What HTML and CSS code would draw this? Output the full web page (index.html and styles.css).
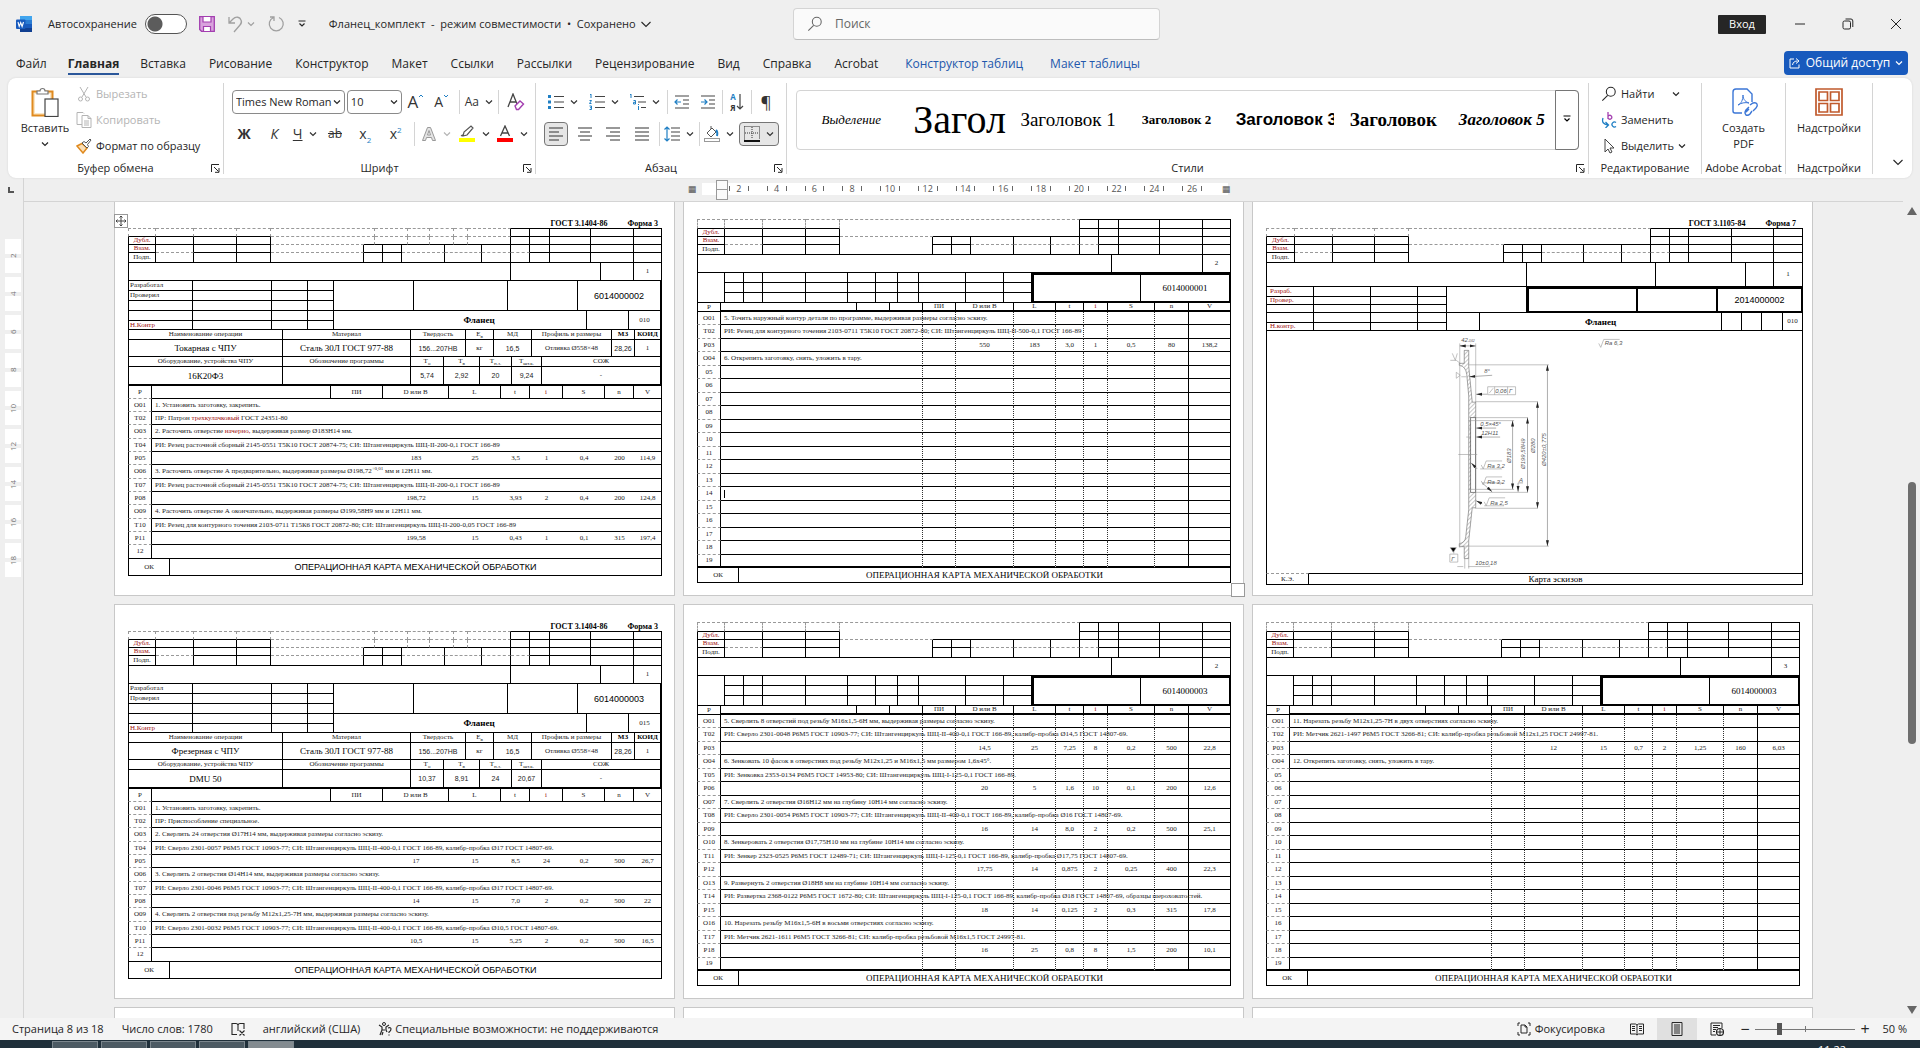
FILE: index.html
```html
<!DOCTYPE html>
<html lang="ru">
<head>
    <meta charset="UTF-8">
    <meta name="viewport" content="width=device-width, initial-scale=1.0">
    <title>Фланец_комплект - Word</title>
    <link rel="stylesheet" href="styles.css">
</head>
<body>

    <!-- shared symbols -->
    <svg class="defs" aria-hidden="true">
        <symbol id="chev" viewBox="0 0 8 8"><path d="M1 2.5l3 3 3-3" fill="none" stroke="currentColor" stroke-width="1.2"/></symbol>
        <symbol id="bigchev" viewBox="0 0 12 12"><path d="M1.500 4L6 8.500 10.500 4" fill="none" stroke="currentColor" stroke-width="1.1"/></symbol>
        <symbol id="launch" viewBox="0 0 9 9"><path d="M.5 8V.5H8M3 3l4.500 4.500M8 4v4.300H4" fill="none" stroke="currentColor"/></symbol>
        <symbol id="glass" viewBox="0 0 18 18"><circle cx="11" cy="6.500" r="5" fill="none" stroke="currentColor" stroke-width="1.200"/><path d="M7.500 10.500L1.500 16.500" stroke="currentColor" stroke-width="1.200"/></symbol>
    </svg>

    <!-- title bar -->
    <header class="titlebar">
        <div class="quick">
            <svg class="ic16" viewBox="0 0 16 16"><rect x="4" y="0" width="12" height="16" rx="1" fill="#2b7cd3"/><rect x="4" y="0" width="12" height="4" fill="#41a5ee"/><rect x="4" y="8" width="12" height="4" fill="#185abd"/><rect x="4" y="12" width="12" height="4" fill="#103f91"/><rect x="0" y="3.500" width="9.500" height="9.500" rx="1" fill="#185abd"/><path d="M2 6l1.200 4.500L4.700 6.500l1.400 4L7.500 6" fill="none" stroke="#fff" stroke-width="1.100"/></svg>
            <label class="autosave">Автосохранение <input type="checkbox" class="switch"></label>
            <button class="plain" aria-label="Сохранить"><svg class="ic16" viewBox="0 0 16 16"><path d="M.7.7h14.600v14.600H2.500L.7 13.500z" fill="#d9a3dd" stroke="#a33eb0" stroke-width="1.300"/><path d="M4 1v5h8V1M4.500 15v-4.500h7V15" fill="#fff" stroke="#a33eb0" stroke-width="1.200"/></svg></button>
            <button class="plain dim" aria-label="Отменить"><svg class="ic18" viewBox="0 0 18 18"><path d="M2 2v6h6M2 8l4-4c3-3 7-2 8 1 1 2 0 4-1 5L7 17" fill="none" stroke="currentColor" stroke-width="1.300"/></svg><svg class="chev"><use href="#chev"/></svg></button>
            <button class="plain dim" aria-label="Повторить"><svg class="ic18" viewBox="0 0 18 18"><path d="M3 2h4v4M6.500 2.500A7 7 0 1 0 12 2.500" fill="none" stroke="currentColor" stroke-width="1.300"/></svg></button>
            <button class="plain" aria-label="Настройка панели"><svg class="ic10" viewBox="0 0 10 10"><path d="M1.500 2h7M2.500 4.500L5 7l2.500-2.500" fill="none" stroke="currentColor" stroke-width="1.200"/></svg></button>
            <button class="plain docname">Фланец_комплект &nbsp;-&nbsp; режим совместимости &nbsp;•&nbsp; Сохранено <svg class="ic12"><use href="#bigchev"/></svg></button>
        </div>
        <label class="search"><svg class="ic16"><use href="#glass"/></svg><input type="search" placeholder="Поиск" aria-label="Поиск"></label>
        <div class="window-buttons">
            <button class="signin">Вход</button>
            <button class="plain" aria-label="Свернуть"><svg class="ic12" viewBox="0 0 12 12"><path d="M1 6h10" stroke="currentColor"/></svg></button>
            <button class="plain" aria-label="Восстановить"><svg class="ic12" viewBox="0 0 12 12"><rect x="1" y="3" width="7.500" height="8" rx="1.500" fill="none" stroke="currentColor"/><path d="M3.500 1h5.500q1.800 0 1.800 2v6" fill="none" stroke="currentColor"/></svg></button>
            <button class="plain" aria-label="Закрыть"><svg class="ic12" viewBox="0 0 12 12"><path d="M1 1l10 10M11 1L1 11" stroke="currentColor"/></svg></button>
        </div>
    </header>

    <nav class="tabs">
        <a href="#file">Файл</a>
        <a href="#home" class="active">Главная</a>
        <a href="#insert">Вставка</a>
        <a href="#draw">Рисование</a>
        <a href="#design">Конструктор</a>
        <a href="#layout">Макет</a>
        <a href="#refs">Ссылки</a>
        <a href="#mail">Рассылки</a>
        <a href="#review">Рецензирование</a>
        <a href="#view">Вид</a>
        <a href="#help">Справка</a>
        <a href="#acrobat">Acrobat</a>
        <a href="#tdesign" class="context">Конструктор таблиц</a>
        <a href="#tlayout" class="context">Макет таблицы</a>
        <button class="share"><svg class="ic12" viewBox="0 0 12 12"><path d="M5 2H1v9h9V7.500M3.500 8c.5-3 2.500-4 5-4M7 1.500L10 4 7 6.500" fill="none" stroke="currentColor"/></svg> Общий доступ <svg class="chev"><use href="#chev"/></svg></button>
    </nav>

    <!-- ribbon -->
    <section class="ribbon">
        <div class="group clipboard">
            <div class="body">
                <button class="large">
                    <svg class="ic30" viewBox="0 0 30 30"><rect x="2.500" y="4.500" width="20" height="24" fill="#fbe6c4" stroke="#e08a1e" stroke-width="2"/><rect x="5" y="7" width="15" height="19" fill="#fff"/><path d="M7 7V4h3a2.500 2.500 0 0 1 5 0h3v3z" fill="#fff" stroke="#777" stroke-width="1.200"/><rect x="15" y="12" width="13" height="17.500" fill="#fff" stroke="#444" stroke-width="1.200"/></svg>
                    Вставить
                    <svg class="chev"><use href="#chev"/></svg>
                </button>
                <div class="stack">
                    <button class="row off"><svg class="ic16" viewBox="0 0 16 16"><path d="M4 1l6 10M12 1L6 11" stroke="currentColor" fill="none"/><circle cx="4.500" cy="13" r="2" fill="none" stroke="currentColor"/><circle cx="11.500" cy="13" r="2" fill="none" stroke="currentColor"/></svg>Вырезать</button>
                    <button class="row off"><svg class="ic16" viewBox="0 0 16 16"><path d="M6 12.500H1v-12h6l1 1M6 3.500h6l3 3v9H6zM12 3.500v3h3M8 9h5M8 11h5M8 13h5" stroke="currentColor" fill="none"/></svg>Копировать</button>
                    <button class="row"><svg class="ic16" viewBox="0 0 16 16"><path d="M1 8l5-2.500 5 4.500-4 5z" fill="#fbe0b8" stroke="#e08a1e" stroke-width="1.500"/><path d="M6 5l2-1.500 2 1.500 4-4 1 1-3.500 4.500 1 2-1.500 1.500z" fill="#fff" stroke="#555"/></svg>Формат по образцу</button>
                </div>
            </div>
            <div class="caption">Буфер обмена <svg class="launch"><use href="#launch"/></svg></div>
        </div>

        <div class="group font">
            <div class="body rows">
                <div class="line">
                    <label class="combo face"><select aria-label="Шрифт"><option>Times New Roman</option></select><svg class="chev"><use href="#chev"/></svg></label>
                    <label class="combo size"><select aria-label="Размер"><option>10</option></select><svg class="chev"><use href="#chev"/></svg></label>
                    <button class="tool glyph-l">A<svg class="mini blue" viewBox="0 0 6 6"><path d="M1 4l2-2 2 2" fill="none" stroke="currentColor"/></svg></button>
                    <button class="tool glyph-m">A<svg class="mini blue" viewBox="0 0 6 6"><path d="M1 2l2 2 2-2" fill="none" stroke="currentColor"/></svg></button>
                    <i class="bar"></i>
                    <button class="tool drop glyph-s">Aa<svg class="chev"><use href="#chev"/></svg></button>
                    <i class="bar"></i>
                    <button class="tool glyph-l" aria-label="Очистить формат"><svg class="ic18" viewBox="0 0 18 18"><path d="M1 14L6 1l4 10M3 9h6" fill="none" stroke="#444" stroke-width="1.300"/><path d="M8 13l5-5 3.500 3-5 5.500h-2z" fill="#fff" stroke="#a33eb0" stroke-width="1.400"/></svg></button>
                </div>
                <div class="line spread">
                    <button class="tool"><b>Ж</b></button>
                    <button class="tool"><em>К</em></button>
                    <button class="tool drop"><u>Ч</u><svg class="chev"><use href="#chev"/></svg></button>
                    <button class="tool glyph-s"><s>ab</s></button>
                    <button class="tool"><span>x<sub>2</sub></span></button>
                    <button class="tool"><span>x<sup>2</sup></span></button>
                    <i class="bar"></i>
                    <button class="tool drop dim" aria-label="Эффекты"><svg class="ic16" viewBox="0 0 16 16"><path d="M1.500 14.500L6.500 1.500h3l5 13h-3l-1-3h-5l-1 3zM6.500 9h3L8 4.500z" fill="#e4e4e4" stroke="#999"/></svg><svg class="chev"><use href="#chev"/></svg></button>
                    <button class="tool drop" aria-label="Цвет выделения"><svg class="ic18" viewBox="0 0 18 18"><path d="M5 11l1-4 7-6 2 2-6 7-4 1zM3 11l3-2" fill="none" stroke="#555" stroke-width="1.200"/><rect x="1" y="13" width="16" height="4" fill="#ff0"/></svg><svg class="chev"><use href="#chev"/></svg></button>
                    <button class="tool drop" aria-label="Цвет текста"><svg class="ic18" viewBox="0 0 18 18"><path d="M4.500 11L9 1l4.500 10M6 8h6" fill="none" stroke="#444" stroke-width="1.300"/><rect x="1" y="13" width="16" height="4" fill="#f00"/></svg><svg class="chev"><use href="#chev"/></svg></button>
                </div>
            </div>
            <div class="caption">Шрифт <svg class="launch"><use href="#launch"/></svg></div>
        </div>

        <div class="group para">
            <div class="body rows">
                <div class="line lists">
                    <button class="tool drop" aria-label="Маркеры"><svg class="ic16" viewBox="0 0 16 16"><path d="M6 2.500h10M6 8h10M6 13.500h10" stroke="#444" stroke-width="1.200"/><path d="M0 2.500h3M0 8h3M0 13.500h3" stroke="#1f7fc4" stroke-width="3"/></svg><svg class="chev"><use href="#chev"/></svg></button>
                    <button class="tool drop" aria-label="Нумерация"><svg class="ic16" viewBox="0 0 16 16"><path d="M6 2.500h10M6 8h10M6 13.500h10" stroke="#444" stroke-width="1.200"/><path d="M1 1l1-1v4M.5 6.500h2L.5 9.500h2M.5 12h2v3.500h-2M1 13.700h1.500" fill="none" stroke="#1f7fc4"/></svg><svg class="chev"><use href="#chev"/></svg></button>
                    <button class="tool drop" aria-label="Многоуровневый список"><svg class="ic16" viewBox="0 0 16 16"><path d="M4 2.500h10M8 8h8M11 13.500h5" stroke="#444" stroke-width="1.200"/><path d="M0 1l1-1v4M3.500 6.500h2V10h-2V8.300h2M8.500 12v4M8.500 10v1" fill="none" stroke="#1f7fc4"/></svg><svg class="chev"><use href="#chev"/></svg></button>
                    <i class="bar"></i>
                    <button class="tool" aria-label="Уменьшить отступ"><svg class="ic16" viewBox="0 0 16 16"><path d="M1 2h14M9 6h6M9 10h6M1 14h14" stroke="#444" stroke-width="1.200"/><path d="M7 8H1M3.500 5.500L1 8l2.500 2.500" fill="none" stroke="#1f7fc4" stroke-width="1.200"/></svg></button>
                    <button class="tool" aria-label="Увеличить отступ"><svg class="ic16" viewBox="0 0 16 16"><path d="M1 2h14M9 6h6M9 10h6M1 14h14" stroke="#444" stroke-width="1.200"/><path d="M1 8h6M4.500 5.500L7 8l-2.500 2.500" fill="none" stroke="#1f7fc4" stroke-width="1.200"/></svg></button>
                    <i class="bar"></i>
                    <button class="tool sort" aria-label="Сортировка"><span><b class="blue">А</b><b>Я</b></span><svg class="arrow" viewBox="0 0 8 18"><path d="M4 1v15M1 13l3 3 3-3" fill="none" stroke="#444" stroke-width="1.200"/></svg></button>
                    <i class="bar"></i>
                    <button class="tool glyph-l">¶</button>
                </div>
                <div class="line spread">
                    <button class="tool on" aria-label="По левому краю"><svg class="ic16" viewBox="0 0 16 16"><path d="M1 2h14M1 6h10M1 10h14M1 14h10" stroke="#333" stroke-width="1.200"/></svg></button>
                    <button class="tool" aria-label="По центру"><svg class="ic16" viewBox="0 0 16 16"><path d="M1 2h14M3 6h10M1 10h14M3 14h10" stroke="#333" stroke-width="1.200"/></svg></button>
                    <button class="tool" aria-label="По правому краю"><svg class="ic16" viewBox="0 0 16 16"><path d="M1 2h14M5 6h10M1 10h14M5 14h10" stroke="#333" stroke-width="1.200"/></svg></button>
                    <button class="tool" aria-label="По ширине"><svg class="ic16" viewBox="0 0 16 16"><path d="M1 2h14M1 6h14M1 10h14M1 14h14" stroke="#333" stroke-width="1.200"/></svg></button>
                    <i class="bar"></i>
                    <button class="tool drop" aria-label="Интервал"><svg class="ic16" viewBox="0 0 16 16"><path d="M7 2h9M7 6h9M7 10h9M7 14h9" stroke="#444" stroke-width="1.200"/><path d="M3 1v14M.5 3.500L3 1l2.500 2.500M.5 12.500L3 15l2.500-2.500" fill="none" stroke="#1f7fc4" stroke-width="1.200"/></svg><svg class="chev"><use href="#chev"/></svg></button>
                    <i class="bar"></i>
                    <button class="tool drop" aria-label="Заливка"><svg class="ic16" viewBox="0 0 16 16"><path d="M3 7l5-5 4 4-5 5zM7 3V0" fill="#fff" stroke="#555"/><path d="M12 4q2 2 1 6" fill="none" stroke="#1f7fc4" stroke-width="2"/><rect x=".5" y="12.500" width="15" height="3" fill="#fff" stroke="#999"/></svg><svg class="chev"><use href="#chev"/></svg></button>
                    <button class="tool drop on" aria-label="Границы"><svg class="ic16" viewBox="0 0 16 16"><path d="M.5.5h15v13M.5.500v13M8 1v12M1 7h14" fill="none" stroke="#333" stroke-dasharray="1 1"/><path d="M0 15h16" stroke="#111" stroke-width="2"/></svg><svg class="chev"><use href="#chev"/></svg></button>
                </div>
            </div>
            <div class="caption">Абзац <svg class="launch"><use href="#launch"/></svg></div>
        </div>

        <div class="group styles">
            <div class="body">
                <div class="gallery">
                    <button class="st emph">Выделение</button>
                    <button class="st title">Загол</button>
                    <button class="st h1">Заголовок 1</button>
                    <button class="st h2">Заголовок 2</button>
                    <button class="st h3">Заголовок 3</button>
                    <button class="st h4">Заголовок</button>
                    <button class="st h5">Заголовок 5</button>
                    <button class="more" aria-label="Ещё"><svg class="ic10" viewBox="0 0 10 10"><path d="M1.500 2h7M2.500 4.500L5 7l2.500-2.500" fill="none" stroke="currentColor" stroke-width="1.200"/></svg></button>
                </div>
            </div>
            <div class="caption">Стили <svg class="launch"><use href="#launch"/></svg></div>
        </div>

        <div class="group edit">
            <div class="body">
                <div class="stack">
                    <button class="row"><svg class="ic16"><use href="#glass"/></svg>Найти <svg class="chev far"><use href="#chev"/></svg></button>
                    <button class="row"><svg class="ic16" viewBox="0 0 16 16"><path d="M7 0v7M7 4.500a2 2 0 1 1 0 1.500" fill="none" stroke="#a33eb0" stroke-width="1.300"/><path d="M15 10.500a2.500 2.500 0 1 0 0 4M2 6q-2 6 5 7M4.500 10L7.500 13l-3 3" fill="none" stroke="#1f7fc4" stroke-width="1.300"/></svg>Заменить</button>
                    <button class="row"><svg class="ic16" viewBox="0 0 16 16"><path d="M4 1v13l3-3 2 4 2-1-2-4h4z" fill="#fff" stroke="#444"/></svg>Выделить <svg class="chev"><use href="#chev"/></svg></button>
                </div>
            </div>
            <div class="caption">Редактирование</div>
        </div>

        <div class="group acrobat">
            <div class="body">
                <button class="large">
                    <svg class="ic30" viewBox="0 0 30 30"><path d="M13 26H6q-2 0-2-2V5q0-3 3-3h11l5 5v8" fill="none" stroke="#3b76d6" stroke-width="1.400"/><path d="M9 18c3-1 5-5 5-10 0 5 3 7 6 8-4-1-8 0-11 2z" fill="none" stroke="#3b76d6"/><path d="M17 25l3-3M21 18l3-2q3-1 4 1 1 2-1 4l-3 3M20 20l-3 3q-2 3 0 5 2 1 4-1l2-3" fill="none" stroke="#3b76d6" stroke-width="1.400"/></svg>
                    <span>Создать<br>PDF</span>
                </button>
            </div>
            <div class="caption">Adobe Acrobat</div>
        </div>

        <div class="group addins">
            <div class="body">
                <button class="large">
                    <svg class="ic30" viewBox="0 0 30 30"><path d="M2 2h26v26H2zM5 5h8.500v8.500H5zM16.500 5H25v8.500h-8.500zM5 16.500h8.500V25H5zM16.500 16.500H25V25h-8.500z" fill="none" stroke="#c05a2c" stroke-width="1.700"/></svg>
                    Надстройки
                </button>
            </div>
            <div class="caption">Надстройки</div>
        </div>
        <button class="collapse" aria-label="Свернуть ленту"><svg class="ic12"><use href="#bigchev"/></svg></button>
    </section>

    <!-- rulers and pages -->
    <div class="ruler-row">
        <div class="corner"><i></i></div>
        <div class="hruler">
            <span class="edge">▦</span>
            <div class="scale">
                <i class="indent"></i>
                <span>2</span><span>4</span><span>6</span><span>8</span><span>10</span><span>12</span><span>14</span><span>16</span><span>18</span><span>20</span><span>22</span><span>24</span><span>26</span>
            </div>
            <span class="edge right">▦</span>
        </div>
    </div>

    <main class="workspace">
        <div class="vruler">
            <span>2</span><span>4</span><span>6</span><span>8</span><span>10</span><span>12</span><span>14</span><span>16</span><span>18</span>
        </div>
        <div class="desk" id="desk"></div>
        <div class="scrollbar"><i class="up"></i><i class="thumb"></i><i class="down"></i></div>
    </main>

    <footer class="status">
        <span>Страница 8 из 18</span>
        <span>Число слов: 1780</span>
        <svg class="ic14" viewBox="0 0 14 14"><path d="M6 12.500H1v-11h4q1.500 0 2 1.500.5-1.500 2-1.500h4V7M7 3v6M8.500 8.500l5 5M13.500 8.500l-5 5" fill="none" stroke="currentColor" stroke-width="1.100"/></svg>
        <span>английский (США)</span>
        <span class="access"><svg class="ic14" viewBox="0 0 14 14"><circle cx="6" cy="2" r="1.500" fill="none" stroke="currentColor"/><path d="M1 3l3 2v3l-2 5M11 3L8 5v3l1 2M4 8h3M5 10l-1 3M10 6q3-1 3 1t-2 3v1M11 12.500v1" fill="none" stroke="currentColor" stroke-width="1.200"/></svg>Специальные возможности: не поддерживаются</span>
        <div class="views">
            <button class="plain focus"><svg class="ic14" viewBox="0 0 14 14"><path d="M3 1H1v3M11 1h2v3M3 13H1v-3M11 13h2v-3M4 3h4l2 2v6H4zM8 3v2h2" fill="none" stroke="currentColor"/></svg>Фокусировка</button>
            <button class="view" aria-label="Чтение"><svg class="ic14" viewBox="0 0 14 14"><path d="M7 3v10M.5 2h5L7 3l1.500-1h5v10h-5L7 13l-1.500-1h-5zM2 4.500h3M2 6.500h3M2 8.500h3M9 4.500h3M9 6.500h3M9 8.500h3" fill="none" stroke="currentColor"/></svg></button>
            <button class="view on" aria-label="Разметка"><svg class="ic14" viewBox="0 0 14 14"><path d="M2 .5h10v13H2zM4 3h6M4 5h6M4 7h6M4 9h6M4 11h6" fill="none" stroke="currentColor"/></svg></button>
            <button class="view" aria-label="Веб-документ"><svg class="ic14" viewBox="0 0 14 14"><path d="M6 13H1V1h11v5M3 3.500h7M3 5.500h5M3 7.500h3M3 9.500h2" fill="none" stroke="currentColor"/><circle cx="10" cy="10" r="3.500" fill="#f4f4f4" stroke="currentColor" stroke-width="1.200"/><path d="M6.500 10h7M10 6.500v7" stroke="currentColor"/></svg></button>
            <button class="plain step" aria-label="Уменьшить">−</button>
            <input type="range" class="zoom" min="10" max="190" value="52" aria-label="Масштаб">
            <button class="plain step" aria-label="Увеличить">+</button>
            <span class="pct">50 %</span>
        </div>
    </footer>
    <div class="taskbar"><i></i><i></i><i></i><i></i><i class="current"></i><span>11:22</span></div>

    <script src="sheets.js"></script>
</body>
</html>
```
FILE: styles.css
```css
* {
    box-sizing: border-box;
}

body {
    margin: 0;
    height: 100vh;
    display: flex;
    flex-direction: column;
    overflow: hidden;
    background: #efefef;
    color: #262626;
    font: 11px/16px "Open Sans", "Noto Sans", sans-serif;
}

button, input, select {
    font: inherit;
    color: inherit;
}

button {
    padding: 0;
    border: 0;
    background: none;
    white-space: nowrap;
}

svg {
    flex: none;
}

.defs { position: absolute; width: 0; height: 0; }
.ic10 { width: 10px; height: 10px; }
.ic12 { width: 12px; height: 12px; }
.ic14 { width: 14px; height: 14px; }
.ic16 { width: 16px; height: 16px; }
.ic18 { width: 18px; height: 18px; }
.ic30 { width: 30px; height: 30px; }
.chev { width: 8px; height: 8px; }
.launch { width: 9px; height: 9px; }
.blue { color: #1f7fc4; }
.dim { color: #a0a0a0; }

/* title bar */
.titlebar {
    flex: none;
    height: 48px;
    display: grid;
    grid-template-columns: 1fr 384px 1fr;
    align-items: center;
    padding-left: 16px;
}

.quick {
    display: flex;
    align-items: center;
    gap: 12px;
}

.autosave {
    display: flex;
    align-items: center;
    gap: 8px;
    margin-left: 4px;
}

.switch {
    appearance: none;
    width: 42px;
    height: 20px;
    margin: 0;
    border: 1px solid #555;
    border-radius: 10px;
    background: radial-gradient(circle at 9px 9px, #5c5c5c 7px, #fff 8px);
}

.plain {
    display: flex;
    align-items: center;
    gap: 4px;
}

.quick .dim { gap: 2px; }
.docname { margin-left: 10px; }

.search {
    height: 32px;
    display: flex;
    align-items: center;
    gap: 12px;
    margin-left: 17px;
    padding: 0 13px;
    background: #fafafa;
    border: 1px solid #d4d4d4;
    border-bottom-color: #bdbdbd;
    border-radius: 4px;
    color: #666;
}

.search input {
    flex: 1;
    min-width: 0;
    padding: 0;
    border: 0;
    background: none;
    font-size: 12px;
    outline: none;
}

.search input::placeholder { color: #666; }

.window-buttons {
    display: flex;
    justify-content: flex-end;
    align-items: center;
    gap: 36px;
    padding-right: 18px;
}

.signin {
    width: 48px;
    height: 19px;
    margin-right: -8px;
    background: #262626;
    color: #fff;
    border-radius: 1px;
}

/* tabs */
.tabs {
    flex: none;
    height: 30px;
    display: flex;
    align-items: flex-start;
    gap: 23px;
    padding: 3px 12px 0 16px;
    font-size: 12px;
}

.tabs a {
    height: 24px;
    line-height: 25px;
    color: inherit;
    text-decoration: none;
    white-space: nowrap;
}

.tabs a.active {
    margin: 0 -2px;
    font-weight: bold;
    border-bottom: 2px solid #2b579a;
}

.tabs a.context {
    margin-left: 4px;
    color: #2257ac;
}

.share {
    display: flex;
    align-items: center;
    justify-content: center;
    gap: 5px;
    width: 124px;
    height: 24px;
    margin-left: auto;
    background: #185abd;
    color: #fff;
    border-radius: 4px;
}

/* ribbon */
.ribbon {
    flex: none;
    height: 100px;
    display: flex;
    margin: 0 8px;
    padding: 5px 0 4px;
    background: #fff;
    border-radius: 8px;
    box-shadow: 0 0 2px #d0d0d0;
}

.group {
    flex: none;
    display: flex;
    flex-direction: column;
    border-right: 1px solid #d4d4d4;
}

.clipboard { width: 216px; }
.font { width: 312px; }
.para { width: 251px; }
.styles { flex: 1; min-width: 0; }
.edit { width: 113px; }
.acrobat { width: 84px; }
.addins { width: 87px; }

.body {
    flex: 1;
    display: flex;
    min-height: 0;
}

.caption {
    display: flex;
    justify-content: center;
    align-items: center;
    height: 12px;
    padding: 0 3px;
    white-space: nowrap;
}

.caption .launch {
    order: 2;
    margin-left: auto;
}

.caption:has(.launch)::before {
    content: "";
    width: 9px;
    margin-right: auto;
}

.large {
    display: flex;
    flex-direction: column;
    align-items: center;
    gap: 3px;
    width: 100%;
    padding-top: 4px;
}

.clipboard .large { width: 62px; margin-left: 6px; }
.clipboard .large .chev { margin-top: 1px; }

.stack {
    display: flex;
    flex-direction: column;
    margin-top: -2px;
}

.row {
    height: 26px;
    display: flex;
    align-items: center;
    gap: 4px;
}

.row.off { color: #b4b4b4; }
.edit .stack { padding-left: 12px; }
.edit .far { margin-left: 14px; }

.rows {
    flex-direction: column;
    gap: 8px;
    padding: 7px 7px 0 8px;
}

.line {
    display: flex;
    flex: none;
    align-items: center;
    height: 24px;
    gap: 2px;
}

.spread { justify-content: space-between; }

.combo {
    display: flex;
    align-items: center;
    height: 24px;
    padding: 0 3px;
    border: 1px solid #8a8a8a;
    border-radius: 4px;
}

.combo select {
    flex: 1;
    min-width: 0;
    appearance: none;
    padding: 0;
    border: 0;
    background: none;
}

.face { width: 113px; }
.size { width: 55px; }

.tool {
    display: flex;
    align-items: center;
    justify-content: center;
    min-width: 24px;
    height: 24px;
    font-size: 14px;
    color: #333;
}

.drop { gap: 6px; }
.tool.dim { color: #b4b4b4; }
.glyph-l { font-size: 17px; }
.glyph-m { font-size: 14px; }
.glyph-s { font-size: 12px; }

.mini {
    width: 6px;
    height: 6px;
    align-self: flex-start;
    margin-top: 3px;
}

.tool.on {
    background: #e6e6e6;
    border: 1px solid #767676;
    border-radius: 4px;
}

.tool.drop.on { padding: 0 4px; }

.tool sub, .tool sup {
    color: #1f7fc4;
    font-size: 8px;
    line-height: 0;
}

.bar {
    width: 1px;
    height: 24px;
    background: #d4d4d4;
}

.font .line:not(.spread) .bar { margin: 0 3px; }
.lists .drop { margin: 0 5px 0 4px; }

.sort span {
    display: flex;
    flex-direction: column;
    font-size: 8px;
    line-height: 11px;
}

.arrow { width: 8px; height: 18px; }

.gallery {
    flex: 1;
    display: flex;
    min-width: 0;
    height: 60px;
    margin: 7px 9px 0;
    border: 1px solid #d4d4d4;
    border-radius: 4px;
    color: #000;
    font-family: "Liberation Serif", serif;
}

.st {
    flex: 1;
    min-width: 0;
    margin: 0 5px;
    overflow: hidden;
    text-align: center;
}

.emph { font-size: 13px; font-style: italic; }
.title { font-size: 40px; line-height: 58px; }
.h1 { font-size: 19px; }
.h2 { font-size: 13px; font-weight: bold; }
.h3 { font: bold 17px "Liberation Sans", sans-serif; text-align: left; }
.h4 { font-size: 19px; font-weight: bold; }
.h5 { font-size: 17px; font-weight: bold; font-style: italic; }

.more {
    width: 24px;
    border: 1px solid #767676;
    border-radius: 0 4px 4px 0;
    margin: -1px;
}

.collapse {
    width: 39px;
    height: 20px;
    margin-top: auto;
    padding-left: 10px;
}

/* rulers */
.ruler-row {
    flex: none;
    height: 23px;
    display: flex;
}

.corner {
    width: 24px;
    border-right: 1px solid #d4d4d4;
    padding: 9px 8px;
}

.corner i {
    display: block;
    width: 6px;
    height: 6px;
    border: solid #555;
    border-width: 0 0 2px 2px;
}

.hruler {
    flex: 1;
    display: flex;
    justify-content: center;
    align-items: center;
    padding: 0 26px 2px 0;
    color: #555;
    font-size: 9px;
    line-height: 12px;
}

.scale {
    position: relative;
    display: flex;
    width: 526px;
    padding: 0 17px 0 18px;
    background: #fff;
}

.scale span {
    flex: 1;
    display: flex;
    justify-content: space-between;
    align-items: center;
    padding: 0 9px;
}

.scale span::before, .scale span::after {
    content: "";
    width: 1px;
    height: 5px;
    background: #666;
}

.indent {
    position: absolute;
    left: 14px;
    top: -3px;
    width: 12px;
    height: 20px;
    border: 1px solid #999;
    background: linear-gradient(#fafafa 8px, #999 8px 9px, #fafafa 9px);
}

.edge {
    width: 20px;
    text-align: center;
}

.edge.right {
    position: relative;
    margin-left: -12px;
}

.workspace {
    flex: 1;
    min-height: 0;
    display: flex;
    overflow: hidden;
}

.vruler {
    width: 24px;
    border-right: 1px solid #d4d4d4;
    padding: 36px 6px 0 5px;
    color: #777;
    font-size: 8px;
}

.vruler span {
    display: flex;
    align-items: center;
    justify-content: center;
    height: 38px;
    writing-mode: vertical-rl;
    transform: rotate(180deg);
    background: linear-gradient(#efefef 2px, #fff 2px 17px, #efefef 17px 21px, #fff 21px 36px, #efefef 36px);
}

.desk {
    flex: 1;
    display: grid;
    grid-template-columns: repeat(auto-fit, 561px);
    grid-auto-rows: 394px;
    justify-content: center;
    align-content: start;
    gap: 9px 8px;
    border-top: 1px solid #d4d4d4;
    margin-right: 1px;
    overflow: hidden;
}

.scrollbar {
    width: 16px;
    display: flex;
    flex-direction: column;
    align-items: center;
    padding: 6px 0 4px;
}

.up, .down {
    border: 5px solid transparent;
}

.up { border-top: 0; border-bottom: 8px solid #666; }
.down { border-bottom: 0; border-top: 8px solid #666; margin-top: auto; }

.thumb {
    width: 8px;
    height: 262px;
    margin-top: 267px;
    border-radius: 4px;
    background: #6e6e6e;
}

/* sheets of paper */
.sheet {
    position: relative;
    margin-top: -1px;
    padding: 17px 12px 0 13px;
    background: #fff;
    border: 1px solid #c8c8c8;
    color: #222;
    font: 7px/7px "Liberation Serif", serif;
}

.sheet.first-form { padding-top: 16px; }

.gost {
    height: 10px;
    margin: 0;
    padding-right: 4px;
    display: flex;
    justify-content: flex-end;
    gap: 20px;
    font-size: 8px;
    line-height: 11px;
    font-weight: bold;
    color: #000;
}

.form {
    table-layout: fixed;
    border-collapse: separate;
    border-spacing: 0;
}

.form td {
    padding: 0;
    border: 0 solid #000;
    border-width: 0 1px 1px 0;
    text-align: center;
    vertical-align: middle;
    white-space: nowrap;
}

.form td.edge-l { border-left-width: 1px; }
.form td.ts { border-top-width: 1px; }
.form td.td { border-top: 1px dashed #999; }
.form td.ld { border-left: 1px dashed #999; }
.form td.bd { border-bottom: 1px dashed #999; }
.form td.rd { border-right: 1px dashed #999; }
.form td.rh { border-right: 1px dotted #333; }
.form td.rn { border-right-width: 0; }
.form td.bn { border-bottom-width: 0; }
.form td.tt { border-top-width: 2px; }
.form td.bt { border-bottom-width: 2px; }
.form td.lt { border-left-width: 2px; }
.form td.rt { border-right-width: 2px; }
.form td.l { text-align: left; padding-left: 3px; }
.form td.nm { text-align: left; padding-left: 1px; }
.form td.tab { padding-left: 38px; }
.form td.b { font-weight: bold; color: #000; }
.form td.m { font-size: 9px; line-height: 10px; color: #000; }
.form td.s { font-family: "Liberation Sans", sans-serif; }
.form td.cursor::before { content: ""; float: left; width: 1px; height: 8px; background: #000; }

.form sub, .form sup {
    font-size: 5px;
    line-height: 0;
}

/* spelling marks */
.err {
    text-decoration: underline wavy #d00000 1px;
    text-underline-offset: -1px;
    color: #a01010;
}

.sketch {
    display: block;
    width: 537px;
    height: 242px;
    border: solid #000;
    border-width: 0 1px 0 1px;
}

.move, .grip {
    position: absolute;
    width: 14px;
    height: 14px;
    background: #fff;
    border: 1px solid #999;
}

.move { left: -1px; top: 12px; }
.grip { right: -2px; bottom: -2px; }
.move svg { display: block; width: 12px; height: 12px; }

/* status bar */
.status {
    flex: none;
    height: 22px;
    display: flex;
    align-items: center;
    gap: 18px;
    padding: 0 13px 0 12px;
    background: #f4f4f4;
    white-space: nowrap;
}

.access {
    display: flex;
    align-items: center;
    gap: 3px;
}

.views {
    display: flex;
    align-items: center;
    margin-left: auto;
}

.focus { margin-right: 12px; }

.view {
    width: 40px;
    height: 22px;
    display: flex;
    align-items: center;
    justify-content: center;
}

.view.on { background: #e0e0e0; }
.step { width: 16px; justify-content: center; font-size: 16px; }

.zoom {
    appearance: none;
    width: 100px;
    height: 16px;
    margin: 0 2px;
    background: linear-gradient(#777, #777) center/100% 1px no-repeat, linear-gradient(#777, #777) center/1px 6px no-repeat;
}

.zoom::-webkit-slider-thumb {
    appearance: none;
    width: 5px;
    height: 12px;
    background: #555;
}

.pct { width: 34px; text-align: right; }

.taskbar {
    flex: none;
    height: 8px;
    display: flex;
    gap: 3px;
    padding-left: 52px;
    overflow: hidden;
    background: #1f2f3a;
    color: #fff;
}

.taskbar i {
    width: 46px;
    height: 8px;
    margin-top: 1px;
    background: #4c5a63;
    border: 1px solid #7b868d;
}

.taskbar i.current { background: #838b90; }
.taskbar span { margin: 2px 74px 0 auto; }
```
FILE: sheets.js
```js
// Builds the forms on the sheets.
// A cell is "right-edge classes|text"; the right edge is one of the table's column edges.
// Class r2/r3 is a row span, "^" skips a column held by a cell of the row above.
function form(edges, rows) {
    const stops = edges.split(' ').map(Number);
    const cols = stops.map((x, i) => i ? x - stops[i - 1] : x + 1);
    let html = '<table class="form" style="width:' + (stops[stops.length - 1] + 1) + 'px"><colgroup>';
    cols.forEach(w => html += '<col style="width:' + w + 'px">');
    html += '</colgroup>';
    rows.forEach(([height, ...cells]) => {
        let start = -1;
        html += '<tr style="height:' + height + 'px">';
        cells.forEach(cell => {
            const [spec, text = ''] = cell.split('|');
            const [edge, ...cls] = spec.trim().split(' ');
            const end = stops.indexOf(Number(edge));
            const span = end - start;
            const tall = cls.find(c => /^r\d$/.test(c));
            if (start < 0) cls.push('edge-l');
            start = end;
            if (cls.includes('^')) return;
            html += '<td class="' + cls.join(' ') + '" colspan="' + span + '"' +
                (tall ? ' rowspan="' + tall[1] + '"' : '') + '>' + text + '</td>';
        });
        html += '</tr>';
    });
    return html + '</table>';
}

const err = s => '<span class="err">' + s + '</span>';

// title block shared by every form, e holds the column edges
function head(e, firstHeight, dots = []) {
    const [a, b, c, d, f, g, h, i, j, k, l, m, n, o, p] = e;
    const all = [...e, ...dots].sort((x, y) => x - y);
    return form(all.join(' '), [
        [firstHeight, a + ' td rd ld', b + ' td rd', c + ' td rd', d + ' td rd',
            ...dots.map(x => x + ' td bd rd'), k + ' td' + (dots.length ? ' bd' : ' bn'),
            l + ' ts', m + ' ts', n + ' ts', o + ' ts', p + ' ts'],
        [8, a + '|' + err('Дубл.'), b, c, d, f + ' bd rn',
            ...dots.map(x => x + ' rd'), k, l, m, n, o, p],
        [8, a + '|' + err('Взам.'), b + ' bd', c, d, f + (dots.length ? ' bd' : ' bn'), g, h, i + ' bd', j + ' bd', k + ' bd', l + ' bd', m, n, o, p],
        [10, a + '|Подп.', b, c, d, f, g, h, i, j, k, l, m, n, o, p]
    ].map(r => r.map(String)));
}

const EDGES = [27, 65, 108, 142, 235, 254, 273, 316, 353, 382, 401, 421, 462, 505, 533];
const EDGES_K = [28, 66, 108, 142, 237, 256, 275, 317, 355, 384, 403, 422, 465, 507, 536];

// first sheet of an operation card
function cardFirst(d) {
    let html = '<p class="gost"><span>ГОСТ 3.1404-86</span><span>Форма 3</span></p>';
    html += head(EDGES, 9, [246, 279, 301, 325, 339]);
    html += form('382 472 505 533', [[18, '382', '472', '505', '533|1']]);
    html += form('64 143 179 205 285 379 449 458 500 533', [
        [10, '64 nm|Разработал', '143', '179', '205', '285 r3', '379 r3', '449 r3', '533 r3 m s rt|' + d.code],
        [10, '64 nm|Проверил', '143', '179', '205'],
        [10, '64', '143', '179', '205'],
        [10, '64', '143', '179', '205', '458 r2 m b tab|Фланец', '500 r2', '533 r2 rt|' + d.num],
        [9, '64 nm|' + err('Н.Контр'), '143', '179', '205']
    ]);
    html += form('154 282 315 337 351 365 383 403 413 483 506 533', [
        [10, '154|Наименование операции', '282|Материал', '337|Твердость', '365|Е<sub>в</sub>', '403|МД', '483|Профиль и размеры', '506 b|МЗ', '533 b rt|КОИД'],
        [17, '154 m|' + d.op, '282 m|Сталь 30Л ГОСТ 977-88', '337 s|156...207НВ', '365|кг', '403 s|16,5', '483|Отливка Ø558×48', '506 s|28,26', '533 rt|1'],
        [10, '154|Оборудование, устройства ЧПУ', '282|Обозначение программы', '315|Т<sub>о</sub>', '351|Т<sub>в</sub>', '383|Т<sub>п.з.</sub>', '413|Т<sub>шт.к.</sub>', '533 rt|СОЖ'],
        [19, '154 bt m|' + d.machine, '282 bt', '315 s bt|' + d.t[0], '351 s bt|' + d.t[1], '383 s bt|' + d.t[2], '413 s bt|' + d.t[3], '533 bt rt|-']
    ]);
    const rows = [[13, '23 bd|Р', '202', '254|ПИ', '320|D или В', '372|L', '401|t', '434|' + err('i'), '476|S', '505|n', '533|V']];
    d.rows.forEach(([name, text], i) => {
        const h = i % 3 === 2 ? 14 : 13;
        const left = '23 ' + (i < 11 ? 'bd' : '') + '|' + name;
        if (Array.isArray(text)) {
            rows.push([h, left, '254 rn', '320 rn|' + text[0], '372 rn|' + text[1], '401 rn|' + text[2], '434 rn|' + text[3], '476 rn|' + text[4], '505 rn|' + text[5], '533|' + text[6]]);
        } else {
            rows.push([h, left, '533 l|' + text]);
        }
    });
    html += form('23 202 254 320 372 401 434 476 505 533', rows);
    html += form('41 533', [[17, '41|ОК', '533 m s|ОПЕРАЦИОННАЯ КАРТА МЕХАНИЧЕСКОЙ ОБРАБОТКИ']]);
    return html;
}

// following sheets of an operation card
function cardNext(d) {
    let html = head(EDGES, 10);
    html += form('414 505 533', [[18, '414', '505', '533|' + d.page]]);
    const cells = ['46', '65', '108', '150', '178', '200', '221', '268', '306', '334'];
    html += form('27 46 65 108 150 178 200 221 268 306 334 443 533', [
        [10, '27 r3', ...cells, '443 r3 tt lt bt', '533 r3 tt bt rt m|' + d.code],
        [10, '27 ^', ...cells],
        [10, '27 ^', ...cells]
    ]);
    const rows = [[9, '23|Р', '159 bt', '192 bt', '225 bt', '258 bt|ПИ', '316 bt|D или В', '358 bt|L', '386 bt|t', '410 bt|' + err('i'), '457 bt|S', '491 bt|n', '533 bt|V']];
    for (let i = 0; i < 19; i++) {
        const n = String(i + 1).padStart(2, '0');
        const [letter = '', text = ''] = d.rows[i] || [];
        const v = Array.isArray(text) ? text : ['', '', '', '', '', '', ''];
        const h = i && i % 2 ? 14 : 13;
        const last = i === 18 ? ' bt' : '';
        rows.push([h, '23' + (last || ' bd') + '|' + letter + n,
            '225 rh l' + last + (i === 13 && d.cursor ? ' cursor' : '') + '|' + (Array.isArray(text) ? '' : text),
            '258 rh' + last, '316 rh' + last + '|' + v[0], '358 rh' + last + '|' + v[1], '386 rh' + last + '|' + v[2],
            '410 rh' + last + '|' + v[3], '457 rh' + last + '|' + v[4], '491' + last + '|' + v[5], '533' + last + '|' + v[6]]);
    }
    html += form('23 159 192 225 258 316 358 386 410 457 491 533', rows);
    html += form('41 533', [[15, '41|ОК', '533 m|ОПЕРАЦИОННАЯ КАРТА МЕХАНИЧЕСКОЙ ОБРАБОТКИ']]);
    return html;
}

const SKETCH = `<svg class="sketch" viewBox="0 0 537 242" fill="none" stroke="#999" stroke-width=".6" font-family="Liberation Sans" font-style="italic" font-size="6">
    <defs><pattern id="hatch" width="3" height="3" patternUnits="userSpaceOnUse" patternTransform="rotate(45)"><path d="M0 0v3" stroke="#777" stroke-width=".8"/></pattern>
    <marker id="arr" viewBox="0 0 6 4" refX="6" refY="2" markerWidth="6" markerHeight="4" markerUnits="userSpaceOnUse" orient="auto-start-reverse"><path d="M0 .5L6 2 0 3.500z" fill="#222" stroke="none"/></marker></defs>
    <path d="M198 19h4.500v16L206 71h3.500v106H206l-3.500 33v18H198v-12h-5v-3q6-1 6.500-7l3-27V65l-2-22q-1-8-7.500-9v-2h5z" fill="url(#hatch)" stroke="#666"/>
    <rect x="204.500" y="86.500" width="5" height="75" fill="#fff" stroke="#333"/>
    <path d="M193.500 12v205M209.500 12v59M202 33.500h81M195 215.500h88M209 70.500h63M209 177.500h63M205 86.500h57M205 161.500h57M202 89.500h46M202 158.500h46M192 123.500h19M198.500 228v10M202.500 228v10M202 236h22"/>
    <g stroke="#777" marker-start="url(#arr)" marker-end="url(#arr)"><path d="M193.500 14.500h16"/><path d="M281.500 33.500v182"/><path d="M271.500 70.500v107"/><path d="M261.500 86.500v75"/><path d="M246.500 89.500v69"/></g>
    <g stroke="#777"><path marker-start="url(#arr)" d="M203 45.500l23-1.500"/><path marker-start="url(#arr)" d="M210 63h11"/><path marker-start="url(#arr)" d="M210 97h20"/><path marker-start="url(#arr)" d="M210 106h24"/><path marker-start="url(#arr)" d="M205 132l6 6"/><path marker-start="url(#arr)" d="M226 161l-10-9"/><path marker-start="url(#arr)" d="M210 170l6 3"/><path marker-start="url(#arr)" d="M252 161v-9h5"/></g>
    <path d="M195 45.500h5M202 97h3M200 106h4M191 236h6M221.500 55.500h28v8h-28zM228.500 55.500v8M241.500 55.500v8M223 62l4-5M183.500 223.500h8v8h-8zM187.500 220v3M184 29h6l4 3M186 22l3 7 2-7M190 41v6l4-3z"/>
    <path d="M184 217h6l-3 4.500z" fill="#000"/>
    <path d="M215 134l2 4 3-8h16M214 138h22M215 150l2 4 3-8h16M216 152h20M218 171l2 4 3-8h16M218 175h20M333 12l2 4 3-8h16"/>
    <g fill="#555" stroke="none"><text x="195" y="11">42<tspan font-size="3">-0,62</tspan></text><text x="218" y="42">8°</text><text x="229" y="62">0,06</text><text x="243" y="62">Г</text><text x="214" y="95">0,5×45°</text><text x="215" y="104">12Н11</text>
    <text x="221" y="137">Ra 3,2</text><text x="221" y="153">Ra 3,2</text><text x="224" y="174">Ra 2,5</text><text x="339" y="14">Ra 6,3</text><text x="253" y="151">А</text><text x="185" y="230">Г</text><text x="209" y="234">10±0,18</text>
    <text transform="translate(245 132) rotate(-90)">Ø183</text><text transform="translate(259 138) rotate(-90)">Ø199,58Н9</text><text transform="translate(269 122) rotate(-90)">Ø280</text><text transform="translate(280 135) rotate(-90)">Ø420±0,775</text></g>
</svg>`;

function sketchCard() {
    return '<p class="gost"><span>ГОСТ 3.1105-84</span><span>Форма 7</span></p>' +
        head(EDGES_K, 9) +
        form('260 389 479 507 536', [[24, '260', '389', '479', '507', '536|1']]) +
        form('47 104 151 180 213 260 371 451 455 475 495 516 536', [
            [10, '47 l|' + err('Разраб.'), '104', '151', '180', '260 r3', '371 r3 tt lt bt rt', '451 r3 tt bt rt', '536 r3 tt bt rt m s|2014000002'],
            [8, '47 l|' + err('Провер.'), '104', '151', '180'],
            [8, '47', '104', '151', '180'],
            [10, '47', '104', '151', '180', '213 r2', '455 r2 m b|Фланец', '475 r2', '495 r2', '516 r2', '536 r2|010'],
            [8, '47 l|' + err('Н.контр.'), '104', '151', '180']
        ]) + SKETCH +
        form('42 536', [[11, '42 td|К.Э.', '536 ts m|Карта эскизов']]);
}

const BORING_TOOL = 'РИ: Резец расточной сборный 2145-0551 Т5К10 ГОСТ 20874-75; СИ: Штангенциркуль ШЦ-II-200-0,1 ГОСТ 166-89';
const MOVE_HANDLE = '<span class="move"><svg viewBox="0 0 12 12"><path d="M6 1v10M1 6h10M4.500 2.500L6 1l1.500 1.500M4.500 9.500L6 11l1.500-1.500M2.500 4.500L1 6l1.500 1.500M9.500 4.500L11 6 9.500 7.500" fill="none" stroke="#444"/></svg></span>';

const sheets = [
    ['first-form', cardFirst({
        code: '6014000002', num: '010', op: 'Токарная с ЧПУ', machine: '16К20Ф3', t: ['5,74', '2,92', '20', '9,24'],
        rows: [
            ['О01', '1. Установить заготовку, закрепить.'],
            ['Т02', 'ПР: Патрон ' + err('трехкулачковый') + ' ГОСТ 24351-80'],
            ['О03', '2. Расточить отверстие ' + err('начерно,') + ' выдерживая размер Ø183Н14 мм.'],
            ['Т04', BORING_TOOL],
            ['Р05', ['183', '25', '3,5', '1', '0,4', '200', '114,9']],
            ['О06', '3. Расточить отверстие А предварительно, выдерживая размеры Ø198,72<sup>+0,01</sup> мм и 12Н11 мм.'],
            ['Т07', BORING_TOOL],
            ['Р08', ['198,72', '15', '3,93', '2', '0,4', '200', '124,8']],
            ['О09', '4. Расточить отверстие А окончательно, выдерживая размеры Ø199,58Н9 мм и 12Н11 мм.'],
            ['Т10', 'РИ: Резец для контурного точения 2103-0711 Т15К6 ГОСТ 20872-80; СИ: Штангенциркуль ШЦ-II-200-0,05 ГОСТ 166-89'],
            ['Р11', ['199,58', '15', '0,43', '1', '0,1', '315', '197,4']],
            ['12', '']
        ]
    }) + MOVE_HANDLE],
    ['', cardNext({
        page: 2, code: '6014000001', cursor: true,
        rows: [
            ['О', '5. Точить наружный контур детали по программе, выдерживая размеры согласно эскизу.'],
            ['Т', 'РИ: Резец для контурного точения 2103-0711 Т5К10 ГОСТ 20872-80; СИ: Штангенциркуль ШЦ-II-500-0,1 ГОСТ 166-89'],
            ['Р', ['550', '183', '3,0', '1', '0,5', '80', '138,2']],
            ['О', '6. Открепить заготовку, снять, уложить в тару.']
        ]
    }) + '<span class="grip"></span>'],
    ['first-form', sketchCard()],
    ['first-form', cardFirst({
        code: '6014000003', num: '015', op: 'Фрезерная с ЧПУ', machine: 'DMU 50', t: ['10,37', '8,91', '24', '20,67'],
        rows: [
            ['О01', '1. Установить заготовку, закрепить.'],
            ['Т02', 'ПР: Приспособление специальное.'],
            ['О03', '2. Сверлить 24 отверстия Ø17Н14 мм, выдерживая размеры согласно эскизу.'],
            ['Т04', 'РИ: Сверло 2301-0057 Р6М5 ГОСТ 10903-77; СИ: Штангенциркуль ШЦ-II-400-0,1 ГОСТ 166-89, калибр-пробка Ø17 ГОСТ 14807-69.'],
            ['Р05', ['17', '15', '8,5', '24', '0,2', '500', '26,7']],
            ['О06', '3. Сверлить 2 отверстия Ø14Н14 мм, выдерживая размеры согласно эскизу.'],
            ['Т07', 'РИ: Сверло 2301-0046 Р6М5 ГОСТ 10903-77; СИ: Штангенциркуль ШЦ-II-400-0,1 ГОСТ 166-89, калибр-пробка Ø17 ГОСТ 14807-69.'],
            ['Р08', ['14', '15', '7,0', '2', '0,2', '500', '22']],
            ['О09', '4. Сверлить 2 отверстия под резьбу М12х1,25-7Н мм, выдерживая размеры согласно эскизу.'],
            ['Т10', 'РИ: Сверло 2301-0032 Р6М5 ГОСТ 10903-77; СИ: Штангенциркуль ШЦ-II-400-0,1 ГОСТ 166-89, калибр-пробка Ø10,5 ГОСТ 14807-69.'],
            ['Р11', ['10,5', '15', '5,25', '2', '0,2', '500', '16,5']],
            ['12', '']
        ]
    })],
    ['', cardNext({
        page: 2, code: '6014000003',
        rows: [
            ['О', '5. Сверлить 8 отверстий под резьбу М16х1,5-6Н мм, выдерживая размеры согласно эскизу.'],
            ['Т', 'РИ: Сверло 2301-0048 Р6М5 ГОСТ 10903-77; СИ: Штангенциркуль ШЦ-II-400-0,1 ГОСТ 166-89, калибр-пробка Ø14,5 ГОСТ 14807-69.'],
            ['Р', ['14,5', '25', '7,25', '8', '0,2', '500', '22,8']],
            ['О', '6. Зенковать 10 фасок в отверстиях под резьбу М12х1,25 и М16х1,5 мм размером 1,6х45°.'],
            ['Т', 'РИ: Зенковка 2353-0134 Р6М5 ГОСТ 14953-80; СИ: Штангенциркуль ШЦ-I-125-0,1 ГОСТ 166-89.'],
            ['Р', ['20', '5', '1,6', '10', '0,1', '200', '12,6']],
            ['О', '7. Сверлить 2 отверстия Ø16Н12 мм на глубину 10Н14 мм согласно эскизу.'],
            ['Т', 'РИ: Сверло 2301-0054 Р6М5 ГОСТ 10903-77; СИ: Штангенциркуль ШЦ-II-400-0,1 ГОСТ 166-89, калибр-пробка Ø16 ГОСТ 14807-69.'],
            ['Р', ['16', '14', '8,0', '2', '0,2', '500', '25,1']],
            ['О', '8. Зенкеровать 2 отверстия Ø17,75Н10 мм на глубине 10Н14 мм согласно эскизу.'],
            ['Т', 'РИ: Зенкер 2323-0525 Р6М5 ГОСТ 12489-71; СИ: Штангенциркуль ШЦ-I-125-0,1 ГОСТ 166-89, калибр-пробка Ø17,75 ГОСТ 14807-69.'],
            ['Р', ['17,75', '14', '0,875', '2', '0,25', '400', '22,3']],
            ['О', '9. Развернуть 2 отверстия Ø18Н8 мм на глубине 10Н14 мм согласно эскизу.'],
            ['Т', 'РИ: Развертка 2368-0122 Р6М5 ГОСТ 1672-80; СИ: Штангенциркуль ШЦ-I-125-0,1 ГОСТ 166-89, калибр-пробка Ø18 ГОСТ 14807-69, образцы шероховатостей.'],
            ['Р', ['18', '14', '0,125', '2', '0,3', '315', '17,8']],
            ['О', '10. Нарезать резьбу М16х1,5-6Н в восьми отверстиях согласно эскизу.'],
            ['Т', 'РИ: Метчик 2621-1611 Р6М5 ГОСТ 3266-81; СИ: калибр-пробка резьбовой М16х1,5 ГОСТ 24997-81.'],
            ['Р', ['16', '25', '0,8', '8', '1,5', '200', '10,1']]
        ]
    })],
    ['', cardNext({
        page: 3, code: '6014000003',
        rows: [
            ['О', '11. Нарезать резьбу М12х1,25-7Н в двух отверстиях согласно эскизу.'],
            ['Т', 'РИ: Метчик 2621-1497 Р6М5 ГОСТ 3266-81; СИ: калибр-пробка резьбовой М12х1,25 ГОСТ 24997-81.'],
            ['Р', ['12', '15', '0,7', '2', '1,25', '160', '6,03']],
            ['О', '12. Открепить заготовку, снять, уложить в тару.']
        ]
    })],
    ['', ''], ['', ''], ['', '']
];

document.getElementById('desk').innerHTML =
    sheets.map(([cls, html]) => '<article class="sheet ' + cls + '">' + html + '</article>').join('');
```
